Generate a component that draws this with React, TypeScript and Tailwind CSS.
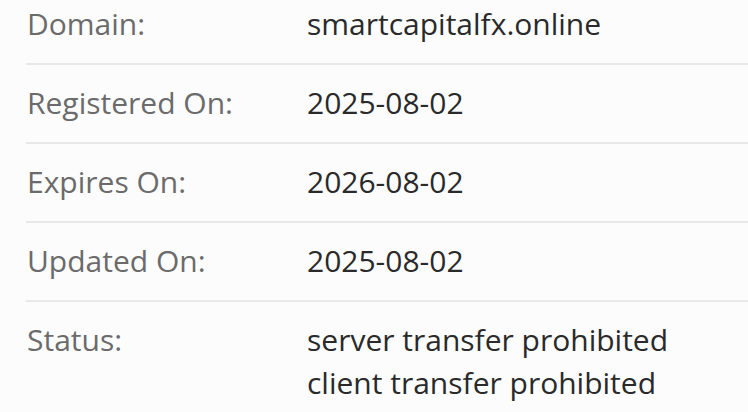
import React from "react";

const rows: { label: string; values: string[] }[] = [
  { label: "Domain:", values: ["smartcapitalfx.online"] },
  { label: "Registered On:", values: ["2025-08-02"] },
  { label: "Expires On:", values: ["2026-08-02"] },
  { label: "Updated On:", values: ["2025-08-02"] },
  { label: "Status:", values: ["server transfer prohibited", "client transfer prohibited"] },
];

export default function App() {
  return (
    <div
      className="w-[748px] h-[412px] overflow-hidden bg-[#fcfcfc]"
      style={{ fontFamily: '"Open Sans", sans-serif' }}
    >
      <div className="ml-[26px] mt-[-15px] text-[30px] leading-[43px]">
        {rows.map((r, i) => (
          <div
            key={r.label}
            className={
              i === 0
                ? "flex pt-[17px] pb-[18px]"
                : "flex pt-[16px] pb-[18px] border-t-2 border-[#e8e8e8]"
            }
          >
            <div className="w-[281px] shrink-0 pl-[1px] text-[#6b6b6b]">{r.label}</div>
            <div className="text-[#2a2a2a]">
              {r.values.map((v) => (
                <div key={v}>{v}</div>
              ))}
            </div>
          </div>
        ))}
      </div>
    </div>
  );
}
